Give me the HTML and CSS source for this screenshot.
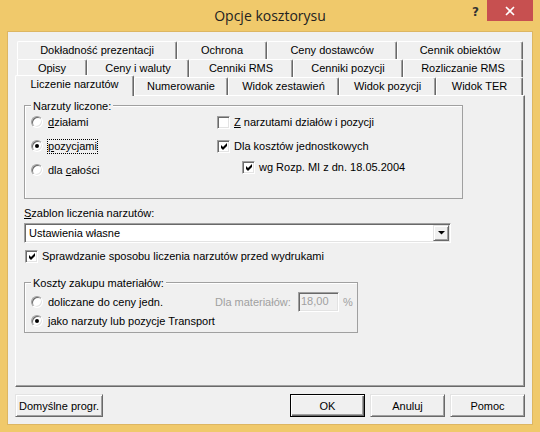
FILE: index.html
```html
<!DOCTYPE html>
<html lang="pl">
<head>
<meta charset="utf-8">
<title>Opcje kosztorysu</title>
<link rel="stylesheet" href="styles.css">
</head>
<body>
<div class="window">
  <div class="titlebar">
    <div class="tb-left"></div>
    <div class="title">Opcje kosztorysu</div>
    <div class="tb-right">
      <div class="help">?</div>
      <div class="close">
        <svg width="10" height="10" viewBox="0 0 10 10"><path d="M1 1 L9 9 M9 1 L1 9" stroke="#fff" stroke-width="1.6" fill="none"/></svg>
      </div>
    </div>
  </div>
  <div class="client">
    <div class="tabs">
      <div class="tabrow">
        <div class="tab w160">Dokładność prezentacji</div>
        <div class="tab w90">Ochrona</div>
        <div class="tab w130">Ceny dostawców</div>
        <div class="tab w126">Cennik obiektów</div>
      </div>
      <div class="tabrow">
        <div class="tab w70">Opisy</div>
        <div class="tab w102">Ceny i waluty</div>
        <div class="tab w104">Cenniki RMS</div>
        <div class="tab w110">Cenniki pozycji</div>
        <div class="tab w120">Rozliczanie RMS</div>
      </div>
      <div class="tabrow">
        <div class="tab sel w119">Liczenie narzutów</div>
        <div class="tab w94">Numerowanie</div>
        <div class="tab w111">Widok zestawień</div>
        <div class="tab w97">Widok pozycji</div>
        <div class="tab w87">Widok TER</div>
      </div>
    </div>
    <div class="page">
      <div class="group g1">
        <div class="legend">Narzuty liczone:</div>
        <div class="gbody">
          <div class="col-left">
            <div class="opt r24"><span class="radio"></span><span class="lbl"><u>d</u>ziałami</span></div>
            <div class="opt r24"><span class="radio on"></span><span class="lbl focus"><u>p</u>ozycjami</span></div>
            <div class="opt r24"><span class="radio"></span><span class="lbl">dla <u>c</u>ałości</span></div>
          </div>
          <div class="col-right">
            <div class="opt r24"><span class="check"></span><span class="ctext"><u>Z</u> narzutami działów i pozycji</span></div>
            <div class="opt r24"><span class="check on"><svg width="7" height="7" viewBox="0 0 7 7"><polygon points="0,2 2,4 6,0 6,3 2,7 0,5" fill="#000"/></svg></span><span class="ctext">Dla kosztów jednostkowych</span></div>
            <div class="opt r18 sub"><span class="check on"><svg width="7" height="7" viewBox="0 0 7 7"><polygon points="0,2 2,4 6,0 6,3 2,7 0,5" fill="#000"/></svg></span><span class="ctext">wg Rozp. MI z dn. 18.05.2004</span></div>
          </div>
        </div>
      </div>
      <div class="flabel"><u>S</u>zablon liczenia narzutów:</div>
      <div class="combo">
        <span class="ctext-combo">Ustawienia własne</span>
        <span class="cbtn"><svg width="7" height="4" viewBox="0 0 7 4"><polygon points="0,0 7,0 3.5,3.6" fill="#000"/></svg></span>
      </div>
      <div class="opt r18 chkrow"><span class="check on"><svg width="7" height="7" viewBox="0 0 7 7"><polygon points="0,2 2,4 6,0 6,3 2,7 0,5" fill="#000"/></svg></span><span class="ctext">Sprawdzanie sposobu liczenia narzutów przed wydrukami</span></div>
      <div class="group g2">
        <div class="legend l2">Koszty zakupu materiałów:</div>
        <div class="g2body">
          <div class="row r20">
            <div class="opt w184"><span class="radio"></span><span class="lbl">doliczane do ceny jedn.</span></div>
            <span class="dis dlabel">Dla materiałów:</span>
            <span class="dinput">18,00</span>
            <span class="dis pct">%</span>
          </div>
          <div class="opt r18"><span class="radio on"></span><span class="lbl">jako narzuty lub pozycje Transport</span></div>
        </div>
      </div>
    </div>
    <div class="buttons">
      <button class="btn wide">Domyślne progr.</button>
      <div class="spacer"></div>
      <button class="btn def">OK</button>
      <button class="btn">Anuluj</button>
      <button class="btn">Pomoc</button>
    </div>
  </div>
</div>
</body>
</html>
```
FILE: styles.css
```css
* { box-sizing: border-box; }
html, body { margin: 0; padding: 0; }
body {
  width: 540px; height: 432px; overflow: hidden;
  font-family: "Liberation Sans", Arial, sans-serif;
  font-size: 11px; color: #000;
}
.window {
  width: 540px; height: 432px;
  background: #F0C96B;
  display: flex; flex-direction: column;
}
.titlebar {
  height: 31px;
  display: grid;
  grid-template-columns: 1fr auto 1fr;
}
.title {
  font-family: "Open Sans", "Noto Sans", sans-serif;
  font-size: 14px; color: #222;
  line-height: 31px;
}
.tb-right { display: flex; justify-content: flex-end; align-items: flex-start; }
.help {
  font-family: "DejaVu Sans", sans-serif; font-weight: bold;
  font-size: 12px; color: #333;
  margin-top: 5px; margin-right: 8px;
}
.close {
  width: 46px; height: 21px;
  background: #C75050;
  margin-right: 7px;
  display: flex; align-items: center; justify-content: center;
}
.close svg { display: block; }
.client {
  margin: 0 7px;
  height: 394px;
  background: #F0F0F0;
  border: 1px solid #DDB662;
  padding: 9px 7px 0;
}
.tabs { padding-left: 2px; }
.tabrow { display: flex; height: 18px; align-items: flex-start; }
.tab {
  height: 18px; line-height: 17px;
  text-align: center; white-space: nowrap;
  background: #F0F0F0;
  border-top: 1px solid #fff;
  border-left: 1px solid #fff;
  border-right: 1px solid #696969;
  box-shadow: inset -1px 0 #A0A0A0;
  border-top-left-radius: 2px;
  border-top-right-radius: 2px;
  flex: none;
}
.tab.sel {
  height: 21px;
  margin: -2px 0 0 -2px;
  position: relative; z-index: 2;
}
.w160 { width: 160px; } .w90 { width: 90px; } .w130 { width: 130px; } .w126 { width: 126px; }
.w70 { width: 70px; } .w102 { width: 102px; } .w104 { width: 104px; } .w110 { width: 110px; } .w120 { width: 120px; }
.w119 { width: 119px; } .w94 { width: 94px; } .w111 { width: 111px; } .w97 { width: 97px; } .w87 { width: 87px; }

.page {
  width: 510px; height: 292px;
  border-top: 1px solid #fff;
  border-left: 1px solid #fff;
  border-right: 1px solid #696969;
  border-bottom: 1px solid #696969;
  box-shadow: inset -1px -1px #A0A0A0;
  padding: 9px 0 0 8px;
}
.group {
  border: 1px solid #A0A0A0;
  box-shadow: inset 1px 1px #fff;
}
.g1 { width: 439px; height: 94px; }
.g2 { width: 334px; height: 51px; margin-top: 17px; }
.legend {
  width: max-content;
  line-height: 13px;
  margin: -6px 0 -3px 6px;
  padding: 0 2px;
  background: #F0F0F0;
}
.legend.l2 { margin-bottom: 2px; }
.gbody { display: flex; }
.col-left { width: 192px; padding-left: 6px; }
.opt { display: flex; align-items: center; }
.r24 { height: 24px; }
.r18 { height: 18px; }
.r20 { height: 20px; }
.sub { padding-left: 25px; }
.radio {
  width: 12px; height: 12px; border-radius: 50%;
  background: #fff;
  border: 1px solid; border-color: #A0A0A0 #fff #fff #A0A0A0;
  box-shadow: inset 1px 1px #696969, inset -1px -1px #E3E3E3;
  display: flex; align-items: center; justify-content: center;
  flex: none;
}
.radio.on::after {
  content: ""; width: 4px; height: 4px; border-radius: 50%; background: #000;
}
.lbl {
  margin-left: 4px;
  border: 1px dotted transparent;
  line-height: 13px;
  white-space: nowrap;
}
.lbl.focus { border-color: #000; }
.check {
  width: 13px; height: 13px;
  background: #fff;
  border: 1px solid; border-color: #A0A0A0 #fff #fff #A0A0A0;
  box-shadow: inset 1px 1px #696969, inset -1px -1px #E3E3E3;
  display: flex; align-items: center; justify-content: center;
  flex: none;
}
.check svg { display: block; margin: 1px 0 0 1px; }
.ctext { margin-left: 4px; line-height: 13px; white-space: nowrap; }
.flabel { margin-top: 8px; line-height: 13px; }
.combo {
  margin-top: 3px;
  width: 427px; height: 20px;
  background: #fff;
  border: 1px solid; border-color: #A0A0A0 #fff #fff #A0A0A0;
  box-shadow: inset 1px 1px #696969, inset -1px -1px #E3E3E3;
  display: flex; align-items: center;
  padding: 1px;
}
.ctext-combo { flex: 1; padding-left: 3px; line-height: 13px; }
.cbtn {
  width: 16px; height: 16px;
  background: #F0F0F0;
  border: 1px solid; border-color: #E3E3E3 #696969 #696969 #E3E3E3;
  box-shadow: inset 1px 1px #fff, inset -1px -1px #A0A0A0;
  display: flex; align-items: center; justify-content: center;
}
.cbtn svg { display: block; }
.chkrow { margin-top: 4px; padding-left: 1px; }
.g2body { padding-left: 6px; }
.row { display: flex; align-items: center; }
.w184 { width: 184px; }
.dis { color: #A0A0A0; }
.dlabel { width: 83px; }
.dinput {
  width: 41px; height: 20px;
  border: 1px solid; border-color: #A0A0A0 #fff #fff #A0A0A0;
  box-shadow: inset 1px 1px #696969, inset -1px -1px #E3E3E3;
  background: #F0F0F0;
  color: #A0A0A0;
  line-height: 17px;
  padding-left: 2px;
}
.pct { margin-left: 4px; }
.buttons {
  display: flex; gap: 5px;
  margin-top: 7px;
}
.spacer { flex: 1; }
.btn {
  width: 75px; height: 23px;
  font-family: "Liberation Sans", Arial, sans-serif; font-size: 11px; color: #000;
  background: #F0F0F0;
  border: 1px solid; border-color: #E3E3E3 #696969 #696969 #E3E3E3;
  box-shadow: inset 1px 1px #fff, inset -1px -1px #A0A0A0;
  padding: 0; margin: 0;
}
.btn.wide { width: 88px; }
.btn.def {
  border-color: #000;
  box-shadow: inset 1px 1px #fff, inset -1px -1px #696969, inset -2px -2px #A0A0A0;
}
```
